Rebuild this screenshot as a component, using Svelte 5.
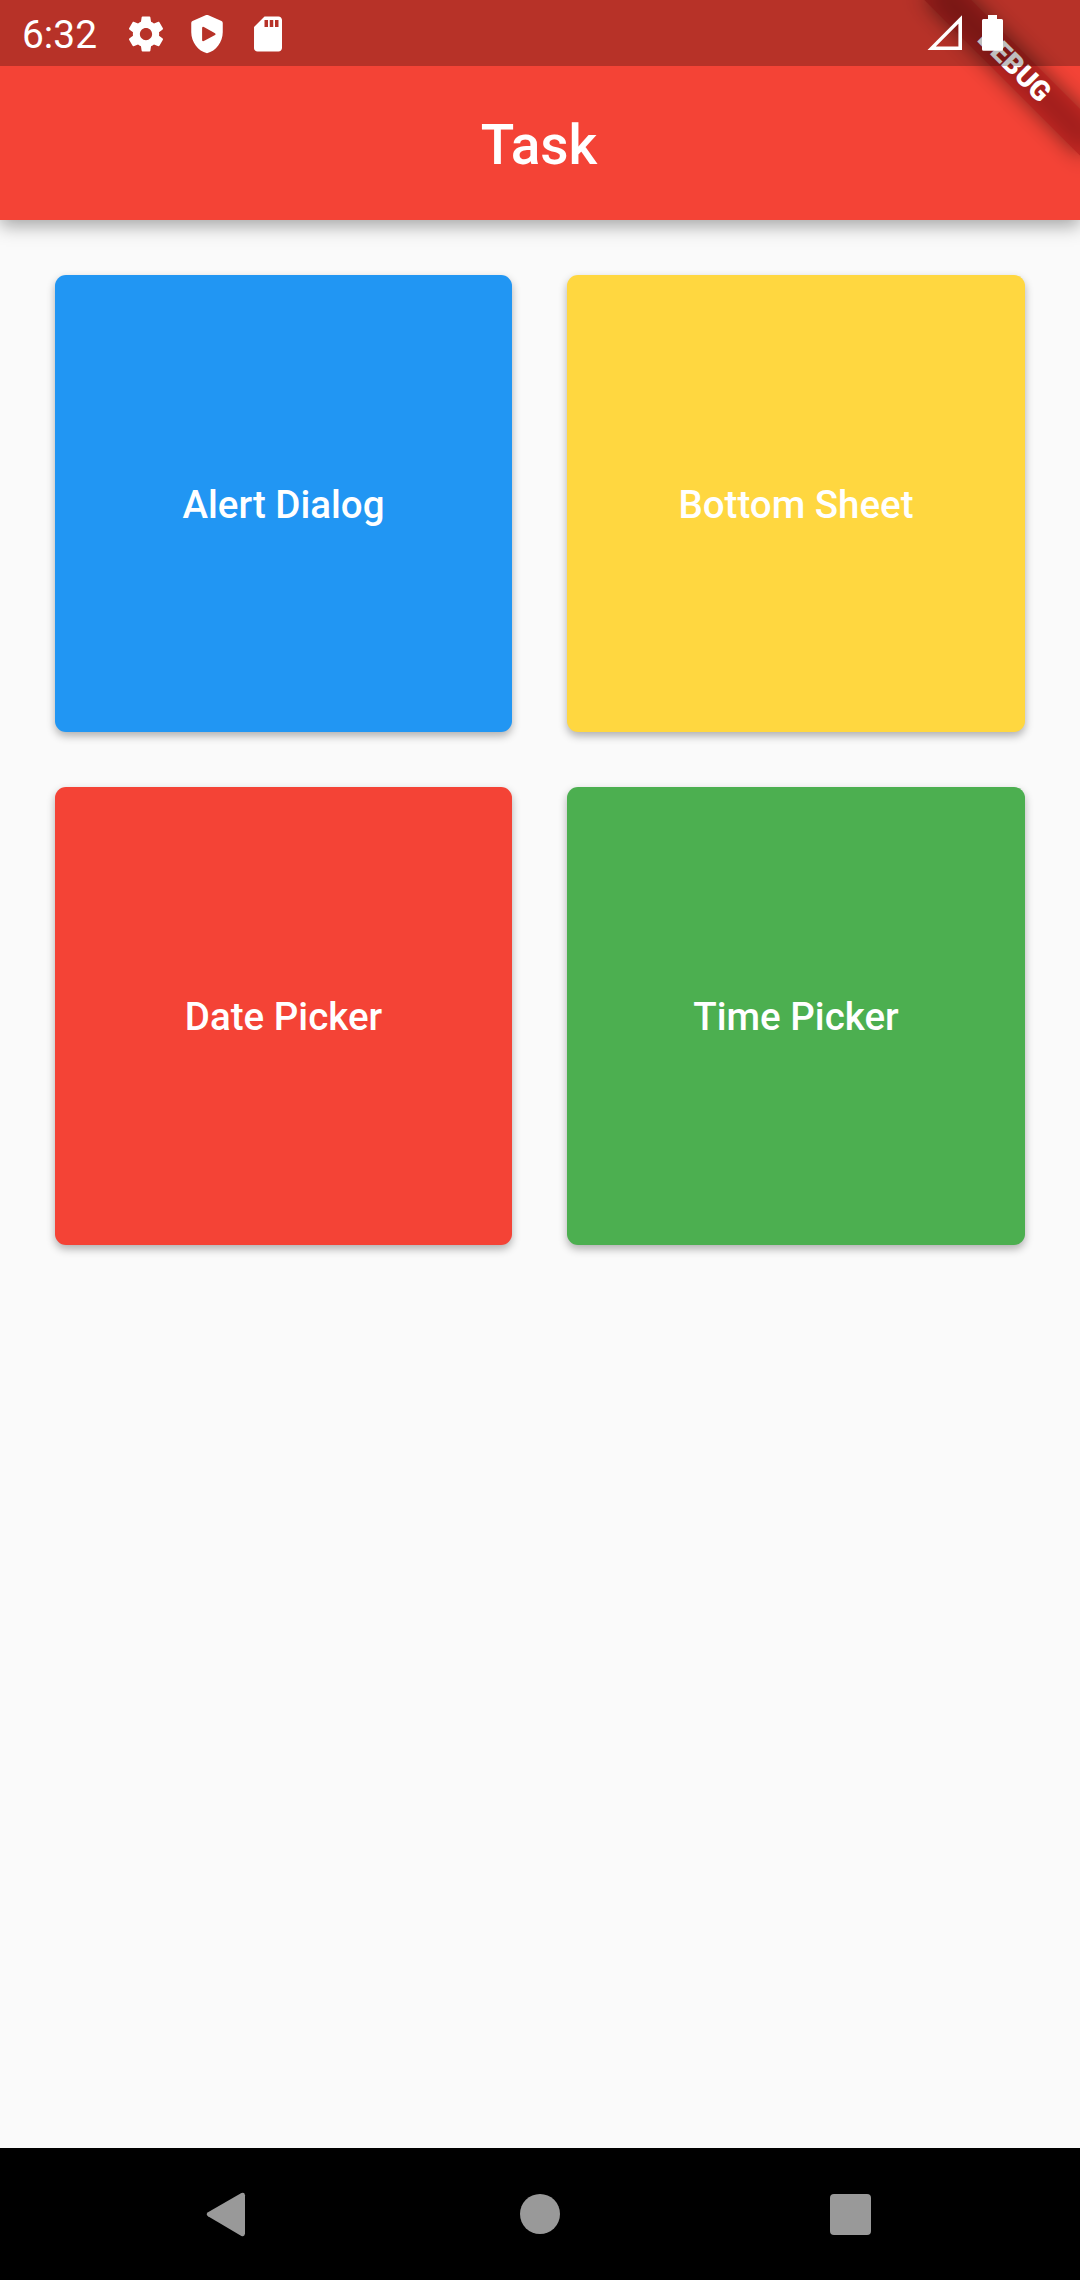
<script>
  const tasks = [
    { label: 'Alert Dialog', tone: 'blue' },
    { label: 'Bottom Sheet', tone: 'amber' },
    { label: 'Date Picker', tone: 'red' },
    { label: 'Time Picker', tone: 'green' },
  ];
</script>

<div class="screen">
  <header class="app-bar">
    <h1>Task</h1>
  </header>

  <main class="grid">
    {#each tasks as task}
      <button class="card {task.tone}">{task.label}</button>
    {/each}
  </main>

  <nav class="nav-bar">
    <svg viewBox="0 0 48 48" aria-label="Back"><path d="M42 5.2V43.8Q41.6 47.2 38.4 45.9L5 26.3Q2.4 24.3 5 22.3L38.4 3.1Q41.6 1.8 42 5.2Z" /></svg>
    <svg viewBox="0 0 48 48" aria-label="Home"><circle cx="24" cy="24" r="20" /></svg>
    <svg viewBox="0 0 48 48" aria-label="Recents"><rect x="1" y="4" width="41" height="41" rx="4" /></svg>
  </nav>

  <div class="banner-area">
    <div class="banner-shadow"></div>
    <div class="banner">DEBUG</div>
  </div>

  <div class="status-bar">
    <span class="clock">6:32</span>
    <div class="notifications">
      <svg viewBox="0 0 24 24"><path d="M19.43 12.98c.04-.32.07-.64.07-.98s-.03-.66-.07-.98l2.11-1.65c.19-.15.24-.42.12-.64l-2-3.46c-.12-.22-.39-.3-.61-.22l-2.49 1c-.52-.4-1.08-.73-1.69-.98l-.38-2.65C14.46 2.18 14.25 2 14 2h-4c-.25 0-.46.18-.49.42l-.38 2.65c-.61.25-1.17.59-1.69.98l-2.49-1c-.23-.09-.49 0-.61.22l-2 3.46c-.13.22-.07.49.12.64l2.11 1.65c-.04.32-.07.65-.07.98s.03.66.07.98l-2.11 1.65c-.19.15-.24.42-.12.64l2 3.46c.12.22.39.3.61.22l2.49-1c.52.4 1.08.73 1.69.98l.38 2.65c.03.24.24.42.49.42h4c.25 0 .46-.18.49-.42l.38-2.65c.61-.25 1.17-.59 1.69-.98l2.49 1c.23.09.49 0 .61-.22l2-3.46c.12-.22.07-.49-.12-.64l-2.11-1.65zM12 15.5c-1.93 0-3.5-1.57-3.5-3.5s1.57-3.5 3.5-3.5 3.5 1.57 3.5 3.5-1.57 3.5-3.5 3.5z" /></svg>
      <svg viewBox="0 0 24 24"><path fill-rule="evenodd" d="M12.5 1.2L20.3 4.5Q21 4.9 21 5.7V11c0 5.55-3.84 10.74-9 12-5.16-1.26-9-6.45-9-12V5.7Q3 4.9 3.7 4.5L11.5 1.2Q12 1 12.5 1.2ZM9.2 8.5V15.5Q9.3 16.3 10.2 16L16.6 12.5Q17.3 12 16.6 11.5L10.2 8Q9.3 7.7 9.2 8.5Z" /></svg>
      <svg viewBox="0 0 24 24"><path d="M18 2h-8L4.02 8 4 20c0 1.1.9 2 2 2h12c1.1 0 2-.9 2-2V4c0-1.1-.9-2-2-2zm-6 6h-2V4h2v4zm3 0h-2V4h2v4zm3 0h-2V4h2v4z" /></svg>
    </div>
    <div class="system">
      <svg class="signal" viewBox="0 0 36 36"><path fill-rule="evenodd" d="M35 .3V35H.5ZM31.4 8.8V31.4H8.8Z" /></svg>
      <svg class="battery" viewBox="0 0 21 36"><path d="M6 0H15V4H19.5Q21 4 21 5.5V34.3Q21 35.8 19.5 35.8H1.5Q0 35.8 0 34.3V5.5Q0 4 1.5 4H6Z" /></svg>
    </div>
  </div>
</div>

<style>
  :global(body) {
    margin: 0;
    background: #fafafa;
  }
  .screen {
    position: relative;
    display: flex;
    flex-direction: column;
    width: 1080px;
    height: 2280px;
    overflow: hidden;
    background: #fafafa;
    color: #fff;
    font-family: Roboto, sans-serif;
  }
  svg {
    display: block;
    fill: currentColor;
  }
  .app-bar {
    display: flex;
    align-items: center;
    justify-content: center;
    box-sizing: border-box;
    height: 220px;
    padding: 70px 2px 0 0;
    background: #f44336;
    box-shadow: 0 6px 17px rgba(0, 0, 0, 0.34);
  }
  h1 {
    margin: 0;
    font-size: 55px;
    font-weight: 500;
    line-height: 64px;
  }
  .grid {
    flex: 1;
    display: grid;
    grid-template-columns: 457px 458px;
    grid-template-rows: 457px 458px;
    gap: 55px;
    padding: 55px;
  }
  .card {
    padding: 1px 0 0;
    border: 0;
    border-radius: 11px;
    color: #fff;
    font-family: inherit;
    font-size: 38.5px;
    font-weight: 500;
    box-shadow: 0 4px 8px rgba(0, 0, 0, 0.3);
  }
  .blue { background: #2196f3; }
  .amber { background: #ffd740; }
  .red { background: #f44336; }
  .green { background: #4caf50; }
  .nav-bar {
    display: flex;
    align-items: center;
    justify-content: space-between;
    box-sizing: border-box;
    height: 132px;
    padding: 0 203px;
    background: #000;
    color: #999;
  }
  .nav-bar svg {
    width: 48px;
    height: 48px;
  }
  /* Corner ribbon: origin is the top-right corner of the screen, rotated 45 degrees. */
  .banner-area {
    position: absolute;
    top: 0;
    right: 0;
    width: 0;
    height: 0;
    transform: rotate(45deg);
  }
  .banner-shadow,
  .banner {
    position: absolute;
    left: -110px;
    top: 77px;
    width: 220px;
    height: 33px;
  }
  .banner-shadow {
    background: rgba(0, 0, 0, 0.5);
    filter: blur(10.9px);
  }
  .banner {
    background: rgba(183, 28, 28, 0.627);
    font-size: 28.05px;
    font-weight: 900;
    line-height: 31px;
    text-align: center;
  }
  .status-bar {
    position: absolute;
    inset: 0 0 auto 0;
    display: flex;
    align-items: center;
    box-sizing: border-box;
    height: 66px;
    padding: 0 77px 0 22px;
    background: rgba(0, 0, 0, 0.25);
  }
  .clock {
    width: 103.3px;
    font-size: 38.9px;
    line-height: 46px;
    padding-top: 3px;
  }
  .notifications {
    display: flex;
    gap: 19px;
    padding-top: 1px;
  }
  .notifications svg {
    width: 42px;
    height: 42px;
  }
  .system {
    display: flex;
    gap: 19px;
    margin-left: auto;
  }
  .system svg {
    height: 36px;
  }
  .signal { width: 36px; }
  .battery { width: 21px; }
</style>
